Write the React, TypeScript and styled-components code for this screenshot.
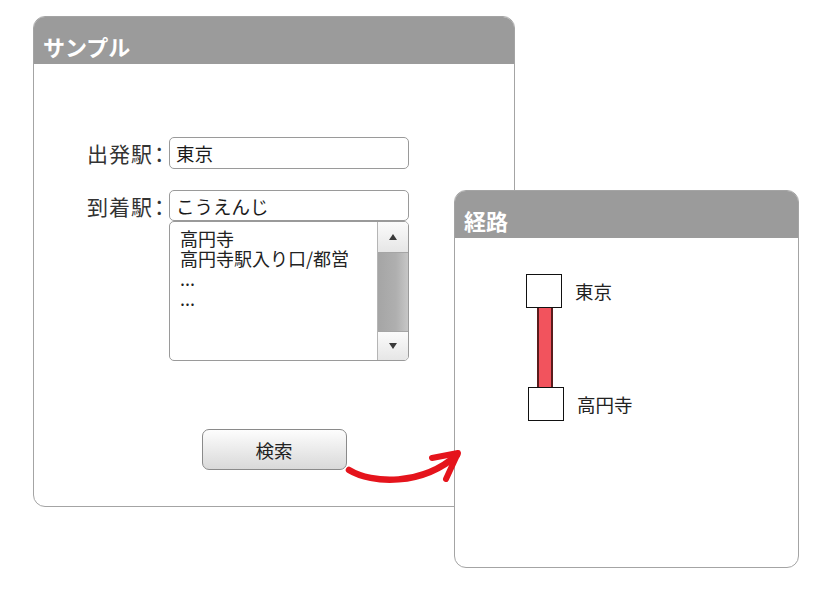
import styled, { createGlobalStyle } from "styled-components";

const GlobalStyle = createGlobalStyle`
    html, body {
        margin: 0;
        padding: 0;
        background: #ffffff;
    }
    body {
        font-family: "Noto Sans CJK JP", "Noto Sans", sans-serif;
        color: #222;
    }
    * {
        box-sizing: border-box;
    }
`

const Canvas = styled.div`
    position: relative;
    width: 825px;
    height: 589px;
    overflow: hidden;
`

const Window = styled.section<{ $left: number; $top: number; $width: number; $height: number }>`
    position: absolute;
    left: ${p => p.$left}px;
    top: ${p => p.$top}px;
    width: ${p => p.$width}px;
    height: ${p => p.$height}px;
    display: flex;
    flex-direction: column;
    background: #fff;
    border: 1.5px solid #a4a4a4;
    border-radius: 12px;
    overflow: hidden;
`

const TitleBar = styled.header`
    height: 47px;
    flex-shrink: 0;
    display: flex;
    align-items: flex-end;
    padding: 0 9px 3px;
    background: #9b9b9b;
    color: #fff;
    font-size: 22px;
    font-weight: 700;
    line-height: 30px;
`

const FormBody = styled.div`
    display: flex;
    flex-direction: column;
    padding: 73px 0 0 53px;
`

const FormGrid = styled.div`
    display: grid;
    grid-template-columns: 82px 240px;
    row-gap: 21px;
`

const Label = styled.label<{ $height: number }>`
    height: ${p => p.$height}px;
    display: flex;
    align-items: center;
    font-size: 21px;
    letter-spacing: 1px;
    color: #333;
`

const Colon = styled.span`
    font-feature-settings: "halt";
    letter-spacing: 0;
    margin-left: 1px;
`

const Field = styled.div`
    display: flex;
    flex-direction: column;
`

const TextInput = styled.div<{ $height: number }>`
    height: ${p => p.$height}px;
    display: flex;
    align-items: center;
    padding: 0 6px;
    border: 1px solid #9a9a9a;
    border-radius: 5px;
    font-size: 18.5px;
    color: #1a1a1a;
`

const ListBox = styled.div`
    height: 140px;
    display: flex;
    border: 1px solid #9a9a9a;
    border-radius: 5px;
    overflow: hidden;
`

const ListItems = styled.ul`
    flex: 1;
    margin: 0;
    padding: 6px 10px;
    list-style: none;
    font-size: 18px;
    line-height: 20px;
    color: #222;
`

const ScrollBar = styled.div`
    width: 31px;
    display: flex;
    flex-direction: column;
    border-left: 1px solid #b5b5b5;
`

const ScrollButton = styled.div<{ $height: number; $down?: boolean }>`
    height: ${p => p.$height}px;
    display: flex;
    align-items: center;
    justify-content: center;
    background: linear-gradient(#fbfbfb, #e6e6e6);
    border-top: ${p => (p.$down ? "1px solid #a5a5a5" : "none")};
    border-bottom: ${p => (p.$down ? "none" : "1px solid #a5a5a5")};

    &::after {
        content: "";
        width: 0;
        height: 0;
        border-left: 4.5px solid transparent;
        border-right: 4.5px solid transparent;
        ${p => (p.$down ? "border-top: 6px solid #3a3a3a;" : "border-bottom: 6px solid #3a3a3a;")}
    }
`

const Thumb = styled.div`
    flex: 1;
    background: linear-gradient(90deg, #a5a5a5 0%, #afafaf 60%, #c6c6c6 100%);
`

const ButtonRow = styled.div`
    display: flex;
    justify-content: center;
    margin: 68px 0 0 -53px;
`

const SearchButton = styled.button`
    width: 145px;
    height: 41px;
    border: 1px solid #8a8a8a;
    border-radius: 7px;
    background: linear-gradient(#fdfdfd, #d9d9d9);
    font-family: inherit;
    font-size: 18.5px;
    color: #222;
    padding: 0;
`

const RouteBody = styled.div`
    display: flex;
    flex-direction: column;
    padding: 36px 0 0 71px;
`

const StationRow = styled.div<{ $shift?: number }>`
    display: flex;
    align-items: center;
    gap: 13px;
    margin-left: ${p => p.$shift ?? 0}px;
`

const StationBox = styled.div`
    width: 36px;
    height: 34px;
    background: #fff;
    border: 1.5px solid #111;
`

const StationName = styled.span`
    font-size: 18.5px;
    color: #222;
`

const Track = styled.div`
    width: 16px;
    height: 79px;
    margin-left: 11px;
    background: #f2535d;
    border-left: 2px solid #5a1c1c;
    border-right: 2px solid #5a1c1c;
`

const ArrowLayer = styled.svg`
    position: absolute;
    left: 340px;
    top: 440px;
    width: 130px;
    height: 55px;
`

export default function App() {
    const candidates = ["高円寺", "高円寺駅入り口/都営", "...", "..."]

    return (
        <Canvas>
            <GlobalStyle />
            <Window $left={33} $top={16} $width={482} $height={491}>
                <TitleBar>サンプル</TitleBar>
                <FormBody>
                    <FormGrid>
                        <Label $height={32}>出発駅<Colon>：</Colon></Label>
                        <TextInput $height={32}>東京</TextInput>
                        <Label $height={31}>到着駅<Colon>：</Colon></Label>
                        <Field>
                            <TextInput $height={31}>こうえんじ</TextInput>
                            <ListBox>
                                <ListItems>
                                    {candidates.map((item, index) => (
                                        <li key={index}>{item}</li>
                                    ))}
                                </ListItems>
                                <ScrollBar>
                                    <ScrollButton $height={31} />
                                    <Thumb />
                                    <ScrollButton $height={29} $down />
                                </ScrollBar>
                            </ListBox>
                        </Field>
                    </FormGrid>
                    <ButtonRow>
                        <SearchButton>検索</SearchButton>
                    </ButtonRow>
                </FormBody>
            </Window>

            <Window $left={454} $top={190} $width={345} $height={378}>
                <TitleBar>経路</TitleBar>
                <RouteBody>
                    <StationRow>
                        <StationBox />
                        <StationName>東京</StationName>
                    </StationRow>
                    <Track />
                    <StationRow $shift={2}>
                        <StationBox />
                        <StationName>高円寺</StationName>
                    </StationRow>
                </RouteBody>
            </Window>

            <ArrowLayer viewBox="340 440 130 55">
                <path
                    d="M349 470 C 372 484, 422 486, 457 455"
                    fill="none"
                    stroke="#e5141c"
                    strokeWidth="6.5"
                    strokeLinecap="round"
                />
                <path
                    d="M432 458 L 458 453 L 446 479"
                    fill="none"
                    stroke="#e5141c"
                    strokeWidth="6"
                    strokeLinecap="round"
                    strokeLinejoin="round"
                />
            </ArrowLayer>
        </Canvas>
    )
}
